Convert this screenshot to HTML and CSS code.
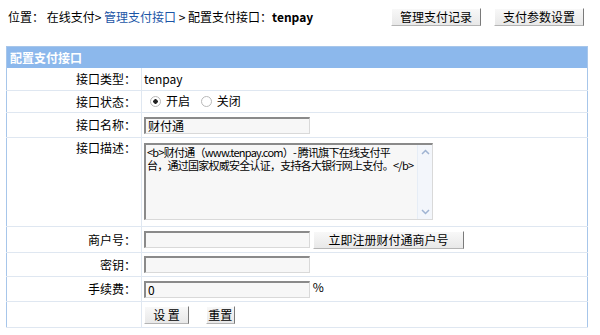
FILE: index.html
```html
<!DOCTYPE html>
<html lang="zh-CN">
<head>
  <meta charset="UTF-8" />
  <title>配置支付接口</title>
  <link rel="stylesheet" href="styles.css">
</head>
<body>
  <div class="topbar">
    <div class="crumbs">
      位置： 在线支付&gt; <a href="#">管理支付接口</a> &gt; 配置支付接口：<b>tenpay</b>
    </div>
    <div class="actions">
      <button class="btn btn-top">管理支付记录</button>
      <button class="btn btn-top">支付参数设置</button>
    </div>
  </div>

  <table class="form">
    <colgroup>
      <col class="col-label">
      <col>
    </colgroup>
    <tr>
      <th colspan="2" class="caption">配置支付接口</th>
    </tr>
    <tr class="row-23">
      <td class="label">接口类型：</td>
      <td class="value">tenpay</td>
    </tr>
    <tr class="row-22">
      <td class="label">接口状态：</td>
      <td class="value">
        <label class="opt"><input type="radio" name="status" checked> 开启</label>
        <label class="opt"><input type="radio" name="status"> 关闭</label>
      </td>
    </tr>
    <tr class="row-25">
      <td class="label">接口名称：</td>
      <td class="value"><input class="txt" type="text" value="财付通"></td>
    </tr>
    <tr class="row-desc">
      <td class="label label-top">接口描述：</td>
      <td class="value value-top">
        <div class="area-wrap">
          <textarea class="area"><b>财付通（www.tenpay.com）- 腾讯旗下在线支付平
台，通过国家权威安全认证，支持各大银行网上支付。</b></textarea>
          <div class="scroll">
            <svg width="9" height="6" viewBox="0 0 9 6"><path d="M1 5 L4.5 1.5 L8 5" fill="none" stroke="#9fb3d2" stroke-width="1.5"/></svg>
            <svg width="9" height="6" viewBox="0 0 9 6"><path d="M1 1 L4.5 4.5 L8 1" fill="none" stroke="#9fb3d2" stroke-width="1.5"/></svg>
          </div>
        </div>
      </td>
    </tr>
    <tr class="row-26">
      <td class="label">商户号：</td>
      <td class="value"><input class="txt" type="text"><button class="btn btn-reg">立即注册财付通商户号</button></td>
    </tr>
    <tr class="row-24">
      <td class="label">密钥：</td>
      <td class="value"><input class="txt" type="text"></td>
    </tr>
    <tr class="row-25">
      <td class="label">手续费：</td>
      <td class="value"><input class="txt" type="text" value="0"> <span class="unit">%</span></td>
    </tr>
    <tr class="row-26">
      <td class="label"></td>
      <td class="value">
        <button class="btn btn-save">设 置</button>
        <button class="btn btn-reset">重置</button>
      </td>
    </tr>
  </table>
</body>
</html>
```

FILE: styles.css
```css
body {
  margin: 0;
  padding: 8px 12px 0 6px;
  font-family: "Noto Sans CJK SC", "DejaVu Sans", sans-serif;
  font-size: 12px;
  line-height: 14px;
  color: #000;
  background: #fff;
}
.topbar {
  display: flex;
  justify-content: space-between;
  align-items: center;
  height: 18px;
  padding-left: 2px;
  padding-right: 4px;
}
.crumbs {
  line-height: 18px;
}
.crumbs a {
  color: #1c56a6;
  text-decoration: none;
}
.actions {
  display: flex;
  gap: 13px;
}
.btn {
  font-family: "Noto Sans CJK SC", sans-serif;
  font-size: 12px;
  line-height: 14px;
  color: #000;
  height: 18px;
  padding: 0;
  background: linear-gradient(#f8f8f8, #e8e8e8);
  border: 1px solid;
  border-color: #fff #7a7a7a #b4b4b4 #fff;
  cursor: pointer;
  vertical-align: top;
}
.btn-top {
  width: 90px;
}
.btn-reg {
  width: 151px;
  margin-left: 3px;
}
.btn-save {
  width: 45px;
}
.btn-reset {
  width: 29px;
  margin-left: 14px;
}
.form {
  width: 582px;
  margin-top: 20px;
  table-layout: fixed;
  border-collapse: collapse;
  border: 1px solid #a7c6ea;
}
.col-label {
  width: 135px;
}
.caption {
  height: 21px;
  padding: 0 0 0 3px;
  background: #8cb8ec;
  color: #fff;
  font-weight: bold;
  text-align: left;
  line-height: 21px;
}
.form td {
  padding: 0;
  border-bottom: 1px solid #dfe7f1;
  overflow: hidden;
}
.row-22 td { height: 21px; }
.row-23 td { height: 22px; }
.row-24 td { height: 23px; }
.row-25 td { height: 24px; }
.row-26 td { height: 25px; }
.row-desc td { height: 83px; }
.label {
  padding-right: 5px !important;
  text-align: right;
  border-right: 1px solid #dfe7f1;
}
.value {
  padding-left: 2px !important;
}
.label-top,
.value-top {
  vertical-align: top;
}
.label-top {
  padding-top: 3px !important;
}
.value-top {
  padding-top: 5px !important;
}
.opt {
  display: inline-flex;
  align-items: center;
  margin-left: 6px;
  margin-right: 2px;
}
.opt input {
  appearance: none;
  width: 11px;
  height: 11px;
  margin: 0 5px 0 0;
  border: 1px solid #b9b9b9;
  border-radius: 50%;
  background: #fff;
}
.opt input:checked {
  background: radial-gradient(circle, #222 0 2px, #fff 2.5px);
}
.txt {
  box-sizing: border-box;
  width: 166px;
  height: 17px;
  padding: 0 2px;
  vertical-align: middle;
  font-family: "Noto Sans CJK SC", sans-serif;
  font-size: 12px;
  line-height: 13px;
  background: #f7f7f7;
  border-top: 2px solid #8a8a8a;
  border-left: 2px solid #8a8a8a;
  border-right: 1px solid #d9d9d9;
  border-bottom: 1px solid #d9d9d9;
  outline: none;
}
.unit {
  margin-left: 0;
}
.area-wrap {
  position: relative;
  width: 289px;
  height: 77px;
}
.area {
  display: block;
  box-sizing: border-box;
  width: 289px;
  height: 77px;
  padding: 1px 18px 0 1px;
  resize: none;
  overflow: hidden;
  white-space: pre;
  letter-spacing: -0.75px;
  font-family: "Noto Sans CJK SC", sans-serif;
  font-size: 11px;
  line-height: 13px;
  background: #f7f7f7;
  border-top: 2px solid #8a8a8a;
  border-left: 2px solid #8a8a8a;
  border-right: 1px solid #d9d9d9;
  border-bottom: 1px solid #d9d9d9;
  outline: none;
}
.scroll {
  position: absolute;
  top: 2px;
  right: 1px;
  bottom: 1px;
  width: 15px;
  display: flex;
  flex-direction: column;
  justify-content: space-between;
  align-items: center;
  padding: 4px 0;
  box-sizing: border-box;
  background: #f3f6fb;
  border-left: 1px solid #e6edf6;
}
```
